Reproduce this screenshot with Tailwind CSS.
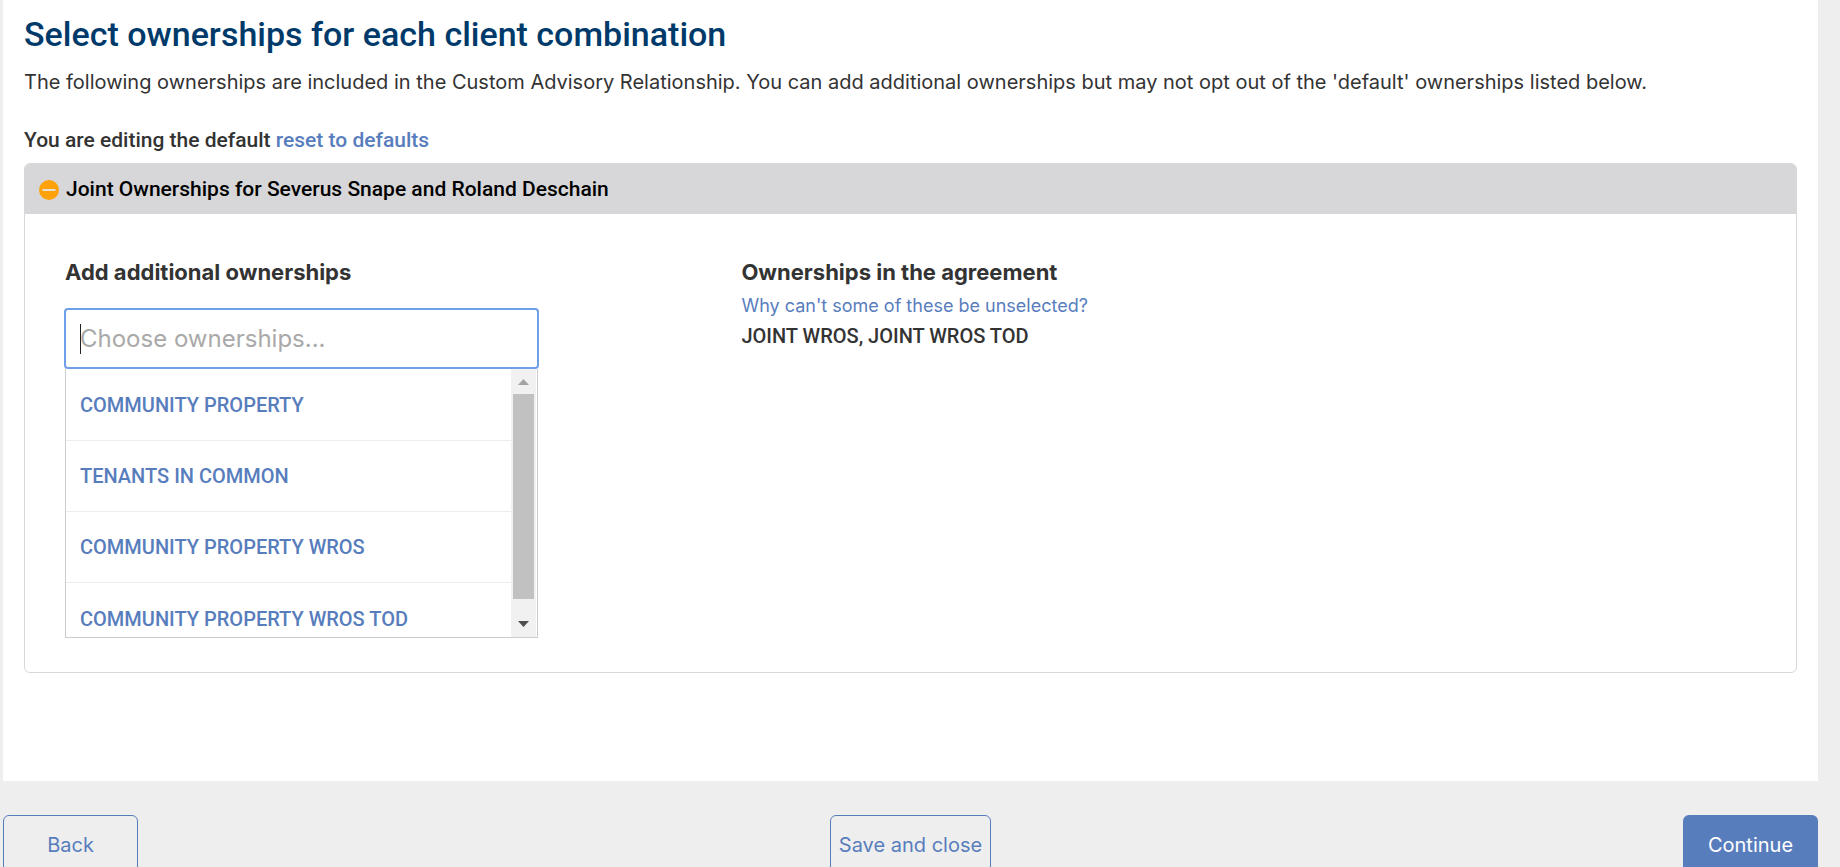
<!DOCTYPE html>
<html lang="en">
<head>
<meta charset="utf-8">
<meta name="viewport" content="width=device-width, initial-scale=1">
<title>Select ownerships</title>
<script src="https://cdn.jsdelivr.net/npm/@tailwindcss/browser@4"></script>
</head>
<body class="h-screen overflow-x-hidden overflow-y-hidden bg-[#eeeeee] pl-[3px] pr-[22px] font-['Inter',sans-serif] text-xl text-[#333333]">
  <main class="bg-white px-[21px] pt-[15px] pb-27">
    <h1 class="font-['Roboto',sans-serif] text-[34px] leading-[38px] font-medium text-[#003a6a]">Select ownerships for each client combination</h1>
    <p class="mt-[13px] leading-8">The following ownerships are included in the Custom Advisory Relationship. You can add additional ownerships but may not opt out of the 'default' ownerships listed below.</p>
    <p class="mt-[27px] mb-[7px] font-['Roboto',sans-serif] text-[21px] leading-[31px] font-medium">You are editing the default <a href="#" class="text-[#587dbd]">reset to defaults</a></p>

    <section class="rounded-md border border-[#d7d7d9]">
      <h2 class="rounded-t-[5px] bg-[#d7d7d9] font-['Roboto',sans-serif] text-[21px] font-medium text-black">
        <button type="button" aria-expanded="true" class="flex h-[50px] w-full items-center gap-[7px] px-[14px] pt-px text-left">
          <svg class="size-5 shrink-0" viewBox="0 0 20 20" aria-hidden="true"><circle cx="10" cy="10" r="10" fill="#ffa20a"/><rect x="3.5" y="9" width="13" height="2" rx="0.5" fill="#e6e0d5"/></svg>
          <span>Joint Ownerships for Severus Snape and Roland Deschain</span>
        </button>
      </h2>
      <div class="grid grid-cols-[2fr_3fr] px-10 pt-11 pb-[34px]">
        <div>
          <label for="ownerships" class="block text-[22px] leading-7 font-bold">Add additional ownerships</label>
          <div class="-ml-px mt-[22px] w-full max-w-[475px]">
            <div class="relative">
              <input id="ownerships" type="text" placeholder="Choose ownerships..." class="block h-[61px] w-full rounded-sm border-2 border-[#6f9fe6] bg-white px-[14px] text-2xl outline-none placeholder:text-[#a9a9a9]">
              <span class="absolute top-4 left-4 h-[30px] w-px bg-[#222222]"></span>
            </div>
            <div class="mx-px flex h-[269px] border border-t-0 border-[#cccccc] pr-px">
              <ul class="min-w-0 flex-1 overflow-hidden pt-px font-['Roboto',sans-serif] font-medium text-[#587dbd]">
                <li><button type="button" class="h-[71px] w-full border-b border-[#ededed] px-[14px] text-left">COMMUNITY PROPERTY</button></li>
                <li><button type="button" class="h-[71px] w-full border-b border-[#ededed] px-[14px] text-left">TENANTS IN COMMON</button></li>
                <li><button type="button" class="h-[71px] w-full border-b border-[#ededed] px-[14px] text-left">COMMUNITY PROPERTY WROS</button></li>
                <li><button type="button" class="h-[71px] w-full px-[14px] text-left">COMMUNITY PROPERTY WROS TOD</button></li>
              </ul>
              <div class="flex w-[25px] shrink-0 flex-col bg-[#f1f1f1] px-0.5" aria-hidden="true">
                <svg class="h-[25px] w-[21px]" viewBox="0 0 21 25"><path d="M5 16h11l-5.500-6z" fill="#a3a3a3"/></svg>
                <div class="h-[205px] bg-[#c1c1c1]"></div>
                <svg class="mt-auto h-[25px] w-[21px]" viewBox="0 0 21 25"><path d="M5 9h11l-5.500 6z" fill="#505050"/></svg>
              </div>
            </div>
          </div>
        </div>
        <div>
          <h3 class="text-[22px] leading-7 font-bold">Ownerships in the agreement</h3>
          <a href="#" class="mt-[6px] block text-lg leading-7 text-[#587dbd]">Why can't some of these be unselected?</a>
          <p class="font-['Roboto',sans-serif] leading-8 font-medium">JOINT WROS, JOINT WROS TOD</p>
        </div>
      </div>
    </section>
  </main>

  <footer class="mt-[34px] grid grid-cols-3">
    <button type="button" class="h-[60px] w-[135px] justify-self-start rounded-md border border-[#587dbd] text-[#587dbd]">Back</button>
    <button type="button" class="h-[60px] w-[161px] justify-self-center rounded-md border border-[#587dbd] text-[#587dbd]">Save and close</button>
    <button type="button" class="h-[60px] w-[135px] justify-self-end rounded-md bg-[#587dbd] text-white">Continue</button>
  </footer>
</body>
</html>
